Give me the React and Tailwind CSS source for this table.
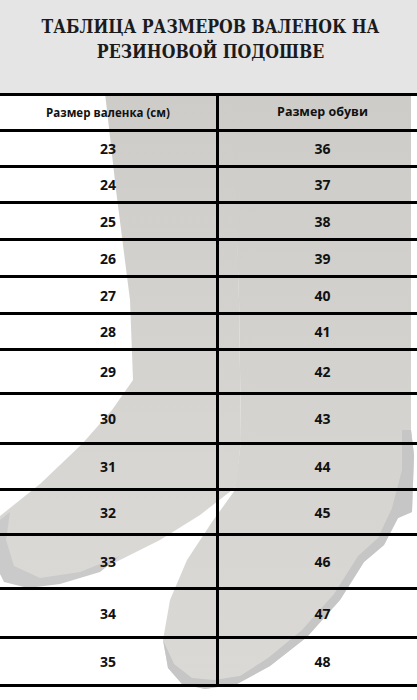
const rows = [
  { felt: "23", shoe: "36", h: "h-[36px]" },
  { felt: "24", shoe: "37", h: "h-[36px]" },
  { felt: "25", shoe: "38", h: "h-[37px]" },
  { felt: "26", shoe: "39", h: "h-[37px]" },
  { felt: "27", shoe: "40", h: "h-[37px]" },
  { felt: "28", shoe: "41", h: "h-[36px]" },
  { felt: "29", shoe: "42", h: "h-[44px]" },
  { felt: "30", shoe: "43", h: "h-[50px]" },
  { felt: "31", shoe: "44", h: "h-[46px]" },
  { felt: "32", shoe: "45", h: "h-[45px]" },
  { felt: "33", shoe: "46", h: "h-[54px]" },
  { felt: "34", shoe: "47", h: "h-[49px]" },
  { felt: "35", shoe: "48", h: "h-[48px]" },
];

function Boots() {
  // faded photo of two felt boots behind the table
  return (
    <svg
      className="absolute top-0 left-0 w-[417px] h-[700px]"
      viewBox="0 0 417 700"
    >
      <defs>
        <linearGradient id="felt" x1="0" y1="0" x2="0" y2="1">
          <stop offset="0" stopColor="#cdccc9" />
          <stop offset="1" stopColor="#dad9d6" />
        </linearGradient>
      </defs>
      {/* back boot */}
      <path
        d="M105 93 L234 93 L239 300 L241 440 L236 487 L200 515 L160 540 L110 565 L60 582 L28 586 L4 580 L0 572 L0 516 L40 484 L82 444 L112 410 L133 380 L130 300 L116 190 Z"
        fill="url(#felt)"
      />
      <path
        d="M0 520 L10 512 L6 540 L14 566 L40 578 L80 572 L120 556 L100 572 L60 584 L28 588 L4 582 L0 574 Z"
        fill="#cacaca"
      />
      {/* front boot */}
      <path
        d="M232 93 L411 93 L411 430 L414 455 L412 512 L398 518 L384 545 L364 562 L340 600 L307 637 L270 666 L237 684 L205 689 L182 684 L168 668 L163 640 L170 600 L187 560 L212 522 L235 490 L241 440 L239 300 Z"
        fill="url(#felt)"
      />
      <path
        d="M402 430 L411 430 L414 455 L412 512 L398 518 L384 545 L364 562 L340 600 L307 637 L270 666 L237 684 L205 689 L182 684 L168 668 L163 640 L174 664 L192 678 L214 680 L240 676 L268 658 L302 630 L334 594 L358 556 L378 538 L392 508 L402 470 Z"
        fill="#c6c6c6"
      />
    </svg>
  );
}

export default function App() {
  return (
    <div className="relative w-[417px] h-[700px] bg-white overflow-hidden">
      <Boots />

      {/* Title */}
      <div className="relative z-10 h-[93px] bg-[#e5e5e5] pt-[14px] pl-[4px] text-center">
        <h1
          className="text-[19px] leading-[25px] font-bold text-[#1b1b1b] font-stretch-condensed scale-x-[0.92]"
          style={{ fontFamily: "'DejaVu Serif Condensed', 'DejaVu Serif', serif" }}
        >
          ТАБЛИЦА РАЗМЕРОВ ВАЛЕНОК НА
          <br />
          РЕЗИНОВОЙ ПОДОШВЕ
        </h1>
      </div>

      {/* Table */}
      <div
        className="relative z-10 border-t-[3px] border-black text-[#111]"
        style={{ fontFamily: "'Open Sans', sans-serif" }}
      >
        <div className="flex h-[36px] border-b-[3px] border-black font-bold">
          <div className="w-[219px] flex items-center justify-center border-r-[3px] border-black text-[11.5px]">
            Размер валенка (см)
          </div>
          <div className="flex-1 flex items-center justify-center pl-[9px] text-[12.5px]">
            Размер обуви
          </div>
        </div>
        {rows.map((r) => (
          <div
            key={r.felt}
            className={`flex ${r.h} border-b-[3px] border-black text-[14px] font-bold`}
          >
            <div className="w-[219px] flex items-center justify-center border-r-[3px] border-black">
              {r.felt}
            </div>
            <div className="flex-1 flex items-center justify-center pl-[9px]">
              {r.shoe}
            </div>
          </div>
        ))}
      </div>
    </div>
  );
}
